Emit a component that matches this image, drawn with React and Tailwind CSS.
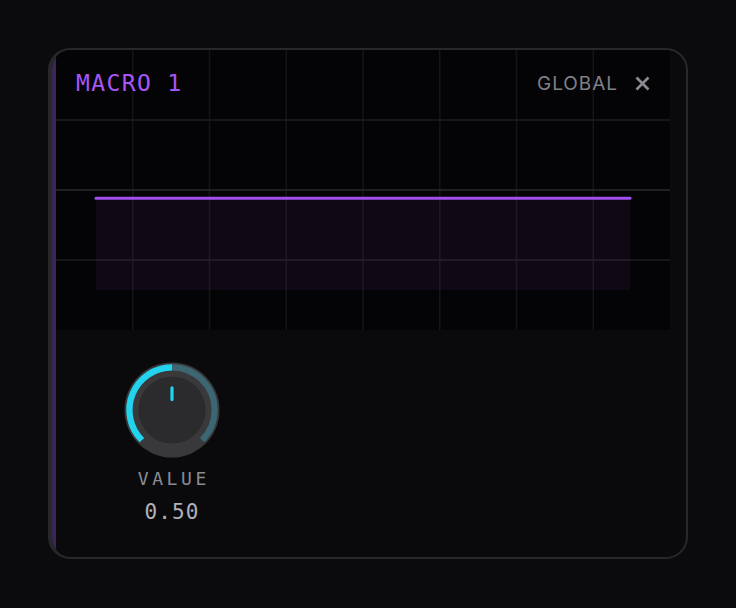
import React from 'react';

const mono = { fontFamily: '"DejaVu Sans Mono", "Liberation Mono", monospace' };

const Grid = () => {
    const cols = [1, 2, 3, 4, 5, 6, 7].map((k) => k * 76.75);
    return (
        <svg className="absolute inset-0" width="614" height="280" viewBox="0 0 614 280">
            {cols.map((x) => (
                <line key={x} x1={x} y1="0" x2={x} y2="280" stroke="#141417" strokeWidth="1.5" />
            ))}
            <line x1="0" y1="70" x2="614" y2="70" stroke="#1c1c20" strokeWidth="1.5" />
            <line x1="0" y1="140" x2="614" y2="140" stroke="#2a2a2e" strokeWidth="1.5" />
            <line x1="0" y1="210" x2="614" y2="210" stroke="#1e1d22" strokeWidth="1.5" />
            <rect x="40" y="149" width="534" height="91" fill="#a855f7" fillOpacity="0.07" />
            <line x1="40" y1="148.3" x2="574" y2="148.3" stroke="#a34ff0" strokeWidth="3" strokeLinecap="round" />
        </svg>
    );
};

const Knob = () => (
    <svg width="96" height="96" viewBox="0 0 96 96">
        <circle cx="48" cy="48" r="47.5" fill="#39393c" />
        <path d="M 17.88 78.12 A 42.6 42.6 0 1 1 78.12 78.12" fill="none" stroke="#3b6672" strokeWidth="6.2" />
        <path d="M 17.88 78.12 A 42.6 42.6 0 0 1 48 5.4" fill="none" stroke="#22d3ee" strokeWidth="6.2" />
        <circle cx="48" cy="48" r="33.6" fill="#2b2b2e" />
        <line x1="48" y1="25.8" x2="48" y2="37.6" stroke="#22d3ee" strokeWidth="3.2" strokeLinecap="round" />
    </svg>
);

export default function App() {
    return (
        <div className="min-h-screen bg-[#0b0b0d] p-12">
            <div className="flex h-[511px] w-[640px] overflow-hidden rounded-[22px] border-2 border-l-4 border-[#28282c] bg-[#0a0a0c]">
                <div className="w-1 shrink-0 bg-[#3a2757]" />
                <div className="flex flex-1 flex-col">
                    <div className="relative h-[280px] w-[614px] bg-[#040406]">
                        <Grid />
                        <div className="absolute inset-x-0 top-0 flex h-[66px] items-center justify-between px-5">
                            <span className="text-[23px] font-medium leading-none tracking-[0.06em] text-[#a855f7]" style={mono}>
                                MACRO 1
                            </span>
                            <div className="flex items-center gap-[17px]">
                                <span
                                    className="text-[19px] leading-none tracking-[0.05em] text-[#808088]"
                                    style={{ fontFamily: 'Inter, "Noto Sans", sans-serif' }}
                                >
                                    GLOBAL
                                </span>
                                <svg width="15" height="15" viewBox="0 0 15 15">
                                    <path d="M1.5 1.5 L13.5 13.5 M13.5 1.5 L1.5 13.5" stroke="#8a8a91" strokeWidth="2.7" />
                                </svg>
                            </div>
                        </div>
                    </div>
                    <div className="flex pl-[68px] pt-8">
                        <div className="flex w-24 flex-col items-center">
                            <Knob />
                            <span className="mt-3 pl-[0.2em] text-[18px] leading-none tracking-[0.2em] text-[#8b8b92]" style={mono}>
                                VALUE
                            </span>
                            <span className="mt-[14px] text-[21px] leading-none tracking-[0.05em] text-[#b1b1b9]" style={mono}>
                                0.50
                            </span>
                        </div>
                    </div>
                </div>
            </div>
        </div>
    );
}
